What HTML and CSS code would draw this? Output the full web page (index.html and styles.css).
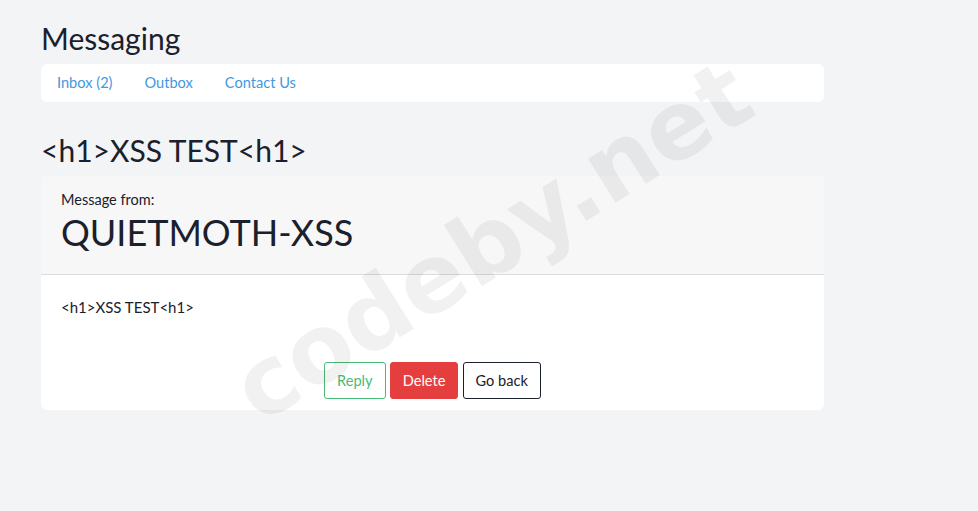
FILE: index.html
```html
<!DOCTYPE html>
<html lang="en">

<head>
    <meta charset="UTF-8">
    <meta name="viewport" content="width=device-width, initial-scale=1.0">
    <title>Messaging</title>
    <link rel="stylesheet" href="styles.css">
</head>

<body>
    <div class="page">
        <h2 class="title">Messaging</h2>

        <nav class="tabs">
            <a href="#">Inbox (2)</a>
            <a href="#">Outbox</a>
            <a href="#">Contact Us</a>
        </nav>

        <h1 class="subject">&lt;h1&gt;XSS TEST&lt;h1&gt;</h1>

        <div class="card">
            <div class="card-head">
                <div class="from-label">Message from:</div>
                <div class="from-name">QUIETMOTH-XSS</div>
            </div>
            <div class="card-body">
                <p class="message">&lt;h1&gt;XSS TEST&lt;h1&gt;</p>
                <div class="actions">
                    <a href="#" class="btn btn-reply">Reply</a>
                    <a href="#" class="btn btn-delete">Delete</a>
                    <a href="#" class="btn btn-back">Go back</a>
                </div>
            </div>
        </div>
    </div>

    <div class="watermark">codeby.net</div>
</body>

</html>
```

FILE: styles.css
```css
body {
    font-family: Lato, "Open Sans", sans-serif;
    margin: 0;
    padding: 0;
    background-color: #f3f4f6;
    color: #1a202c;
    overflow: hidden;
}

.page {
    width: 783px;
    margin-left: 41px;
    padding-top: 20px;
}

.title {
    margin: 0;
    font-size: 30px;
    font-weight: 400;
    line-height: 36px;
}

.tabs {
    margin-top: 8px;
    background: white;
    border-radius: 6px;
    padding: 9px 16px;
    display: flex;
    gap: 32px;
}

.tabs a {
    color: #4299e1;
    text-decoration: none;
    font-size: 14.6px;
    line-height: 20px;
}

.subject {
    margin: 32px 0 10px;
    font-size: 30px;
    font-weight: 400;
    line-height: 32px;
}

.card {
    background: white;
    border-radius: 6px;
    overflow: hidden;
}

.card-head {
    background: #f7f7f7;
    padding: 14px 20px 20px;
    border-bottom: 1px solid #dcdcdc;
}

.from-label {
    font-size: 14.5px;
    line-height: 20px;
}

.from-name {
    font-size: 36px;
    line-height: 44px;
}

.card-body {
    padding: 22px 20px 11px;
}

.message {
    margin: 0;
    font-size: 15px;
    line-height: 20px;
}

.actions {
    margin-top: 45px;
    text-align: center;
}

.btn {
    display: inline-block;
    box-sizing: border-box;
    height: 37px;
    line-height: 35px;
    padding: 0 12px;
    border: 1px solid transparent;
    border-radius: 3px;
    font-size: 14.6px;
    text-decoration: none;
}

.btn-reply {
    border-color: #48bb78;
    color: #48bb78;
}

.btn-delete {
    background-color: #e53e3e;
    border-color: #e53e3e;
    color: white;
}

.btn-back {
    border-color: #1a202c;
    color: #1a202c;
}

.watermark {
    position: absolute;
    left: 492px;
    top: 241px;
    transform: translate(-50%, -50%) rotate(-32deg);
    font-family: "DejaVu Sans", sans-serif;
    font-weight: 700;
    font-size: 95px;
    color: rgba(0, 0, 0, 0.055);
    white-space: nowrap;
    pointer-events: none;
}
```
